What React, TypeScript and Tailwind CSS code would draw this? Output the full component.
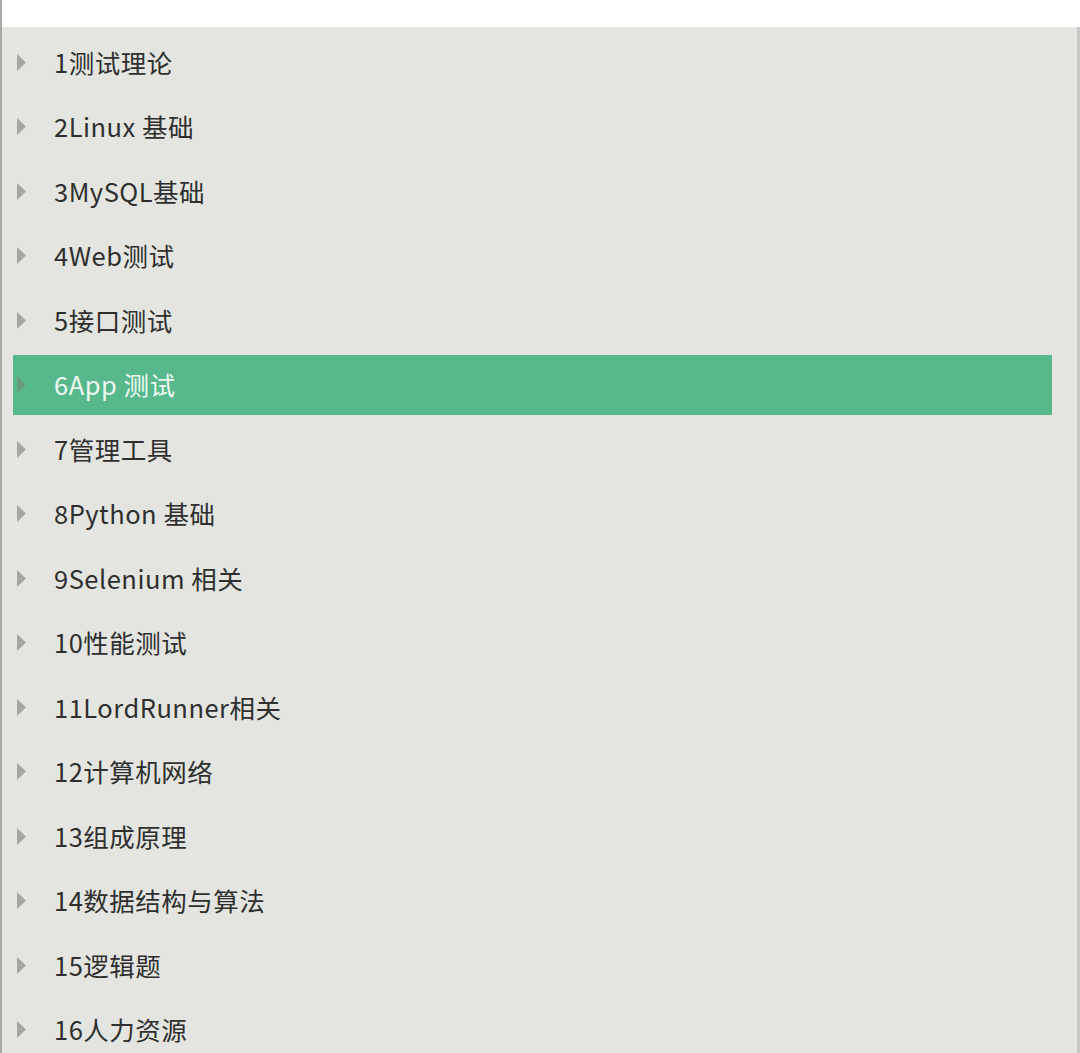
import React from "react";

const items = [
  "1测试理论",
  "2Linux 基础",
  "3MySQL基础",
  "4Web测试",
  "5接口测试",
  "6App 测试",
  "7管理工具",
  "8Python 基础",
  "9Selenium 相关",
  "10性能测试",
  "11LordRunner相关",
  "12计算机网络",
  "13组成原理",
  "14数据结构与算法",
  "15逻辑题",
  "16人力资源",
];

function Tri({ selected }: { selected: boolean }) {
  return (
    <svg width="9" height="17" viewBox="0 0 9 17" className="shrink-0">
      <polygon points="0,0 9,8.5 0,17" fill={selected ? "#6a9c80" : "#a5a6a3"} />
    </svg>
  );
}

export default function App() {
  return (
    <div
      className="w-[1080px] h-[1053px] overflow-hidden bg-white border-l-2 border-[#a9aaa7] flex flex-col"
      style={{ fontFamily: '"Noto Sans CJK SC", "Noto Sans", sans-serif' }}
    >
      <div className="h-[27px] shrink-0 bg-white" />
      <div className="flex-1 bg-[#e4e5e1] border-r-[3px] border-[#c6c7c4] pt-[3px] pr-[25px]">
        {items.map((t, i) => {
          const sel = i === 5;
          return (
            <div key={t} className="h-[64.5px] py-[2.5px] pl-[11px]">
              <div
                className={
                  "h-full flex items-center pl-[4px] " +
                  (sel ? "bg-[#57b98b]" : "")
                }
              >
                <Tri selected={sel} />
                <span
                  className={
                    "ml-[28px] text-[25.5px] leading-none tracking-[0.5px] -mt-[2px] " +
                    (sel ? "text-[#eef8f2]" : "text-[#2e2f2e]")
                  }
                >
                  {t}
                </span>
              </div>
            </div>
          );
        })}
      </div>
    </div>
  );
}
